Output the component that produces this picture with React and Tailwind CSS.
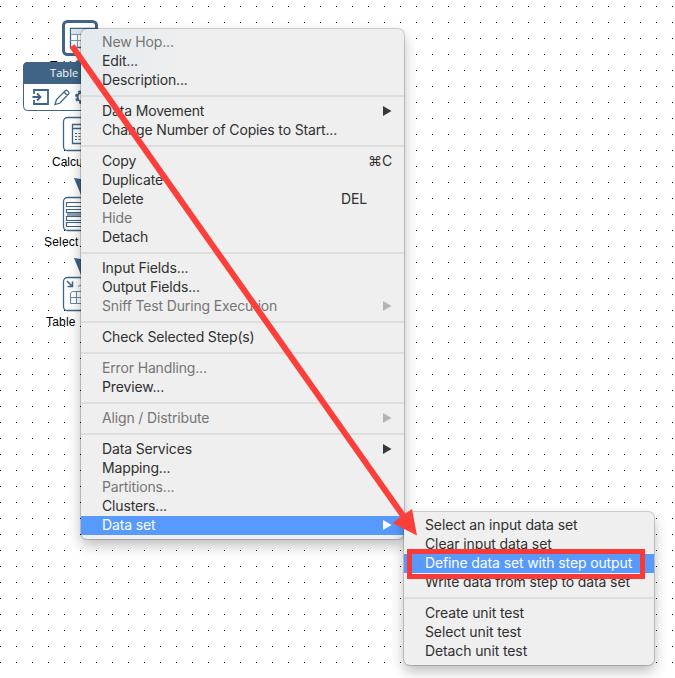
const INK = "#3f6485";

const mainMenu = [
  [{ label: "New Hop...", off: true }, { label: "Edit..." }, { label: "Description..." }],
  [{ label: "Data Movement", sub: true }, { label: "Change Number of Copies to Start..." }],
  [
    { label: "Copy", key: "⌘C" },
    { label: "Duplicate" },
    { label: "Delete", key: "DEL" },
    { label: "Hide", off: true },
    { label: "Detach" },
  ],
  [
    { label: "Input Fields..." },
    { label: "Output Fields..." },
    { label: "Sniff Test During Execution", off: true, sub: true },
  ],
  [{ label: "Check Selected Step(s)" }],
  [{ label: "Error Handling...", off: true }, { label: "Preview..." }],
  [{ label: "Align / Distribute", off: true, sub: true }],
  [
    { label: "Data Services", sub: true },
    { label: "Mapping..." },
    { label: "Partitions...", off: true },
    { label: "Clusters..." },
    { label: "Data set", sub: true, on: true },
  ],
];

const subMenu = [
  [
    { label: "Select an input data set" },
    { label: "Clear input data set" },
    { label: "Define data set with step output", on: true },
    { label: "Write data from step to data set" },
  ],
  [{ label: "Create unit test" }, { label: "Select unit test" }, { label: "Detach unit test" }],
];

function Row({ item }) {
  const tone = item.on ? "bg-[#589afb] text-white" : item.off ? "text-[#757575]" : "text-[#303030]";
  const arrow = item.on ? "#ffffff" : item.off ? "#b4b4b4" : "#383838";
  return (
    <div className={"flex h-[19px] items-center justify-between whitespace-nowrap pl-[21px] pr-3 leading-[17px] " + tone}>
      <span className="pb-0.5">{item.label}</span>
      {item.sub && (
        <svg width="9" height="10" viewBox="0 0 9 10" className="mb-px">
          <path d="M0 0L8.5 5L0 10Z" fill={arrow} />
        </svg>
      )}
      {item.key && <span className={item.key === "DEL" ? "mr-[25px] pb-0.5" : "pb-0.5"}>{item.key}</span>}
    </div>
  );
}

function Menu({ groups, className }) {
  return (
    <div
      className={
        "absolute rounded-md bg-[#efefef] py-1 font-[Inter,sans-serif] text-[14px] shadow-[0_0_0_1px_rgba(0,0,0,0.17),0_6px_14px_rgba(0,0,0,0.28)] " +
        className
      }
    >
      {groups.map((g, i) => (
        <div key={i}>
          {i > 0 && <div className="my-[5px] h-0.5 bg-[#dedede]" />}
          {g.map((it) => (
            <Row key={it.label} item={it} />
          ))}
        </div>
      ))}
    </div>
  );
}

function Canvas() {
  return (
    <svg width="675" height="678" className="absolute inset-0" fontFamily="Liberation Sans, sans-serif" fontSize="12">
      <defs>
        <pattern id="dots" width="16" height="16" patternUnits="userSpaceOnUse">
          <rect x="0" y="6" width="1" height="1" fill="#000" />
        </pattern>
      </defs>
      <rect width="675" height="678" fill="url(#dots)" />
      <g fill="#fff" stroke={INK}>
        <rect x="63.5" y="21.5" width="33" height="33" rx="4" strokeWidth="3" />
        <path d="M70.500 28.500h27v19h-27z" strokeWidth="1.3" />
        <path d="M71 29h26v5h-26z" fill="#dde5ec" stroke="none" />
        <path d="M70.500 34.500h27M70.500 40.500h27M77.500 34.500v13M86.500 34.500v13" stroke="#7f98ad" />
        <rect x="63.5" y="117.5" width="33" height="33" rx="4" strokeWidth="1.3" />
        <path d="M72.5 124.5h18v19h-18zM72.5 128.5h18" strokeWidth="1.3" />
        <path d="M75 133.5h14M75 136.5h14M75 139.5h14" strokeDasharray="2 1.5" />
        <rect x="63.5" y="197.5" width="33" height="33" rx="4" strokeWidth="1.3" />
        <path d="M67 212h26v5h-26z" fill="#8ba1b4" stroke="none" />
        <path d="M66.5 202.5h26v4h-26zM66.5 209.5h26v3h-26zM66.5 216.500h26v4h-26zM66.5 222.5h26v4h-26z" strokeWidth="1.2" />
        <rect x="63.5" y="277.5" width="33" height="33" rx="4" strokeWidth="1.3" />
        <path d="M70.500 293l2-1.500h20v12h-22zM70.500 297.500h22M76.500 291.500v12M84.500 291.500v12" stroke="#6b88a1" />
        <path d="M78 286.500q2-1.500 5-1" stroke="#6b88a1" fill="none" />
        <path d="M67 281l5 5M72.500 281.500v5h-5" strokeWidth="1.5" fill="none" />
      </g>
      <path d="M74 178l14 2-7 15zM74 258l14 2-7 15z" fill={INK} />
      <text x="50" y="70">Table</text>
      <text x="52" y="166">Calcul</text>
      <text x="44" y="246" letterSpacing="0.2">Select</text>
      <text x="46" y="326" letterSpacing="0.2">Table</text>
      <path d="M74 63l7-6 7 6z" fill={INK} />
      <rect x="23.500" y="62.500" width="90" height="48" rx="4" fill="#fff" stroke={INK} />
      <path d="M23 84V67q0-5 5-5h86v22z" fill={INK} />
      <text x="50" y="77" fill="#fff" fontSize="11" fontFamily="Open Sans, sans-serif" letterSpacing="0.1">Table</text>
      <g fill="none" stroke={INK} strokeWidth="2">
        <path d="M34 94v-4h14v14H34v-4M32.500 97h7.500M37 93.500l3.500 3.500-3.500 3.500" strokeWidth="1.8" />
        <path d="M55 104.500l1.500-5L65.500 90.500q1-.6 2 .4l1 1q1 1 .2 2L60 103zM64 92l3.500 3.500" strokeWidth="1.3" />
        <circle cx="82" cy="97" r="4.5" />
        <circle cx="82" cy="97" r="6" strokeDasharray="2.7 2.01" />
      </g>
    </svg>
  );
}

export default function App() {
  return (
    <div className="relative h-[678px] w-[675px] overflow-hidden bg-white">
      <Canvas />
      <Menu
        groups={mainMenu}
        className="left-[81px] top-[29px] w-[323px] bg-[radial-gradient(circle_at_top_left,#e3eaef,#efefef_110px)] tracking-[-0.15px]"
      />
      <Menu groups={subMenu} className="left-[404px] top-[512px] w-[250px] tracking-[-0.12px]" />
      <svg width="675" height="678" className="absolute inset-0">
        <path d="M72 46L404 517" stroke="#fd3f3c" strokeWidth="6" />
        <path d="M392.500 523L412 509L417 535.500Z" fill="#fd3f3c" />
        <rect x="409.500" y="551.500" width="233" height="25" fill="none" stroke="#fb3a37" strokeWidth="5" />
      </svg>
    </div>
  );
}
